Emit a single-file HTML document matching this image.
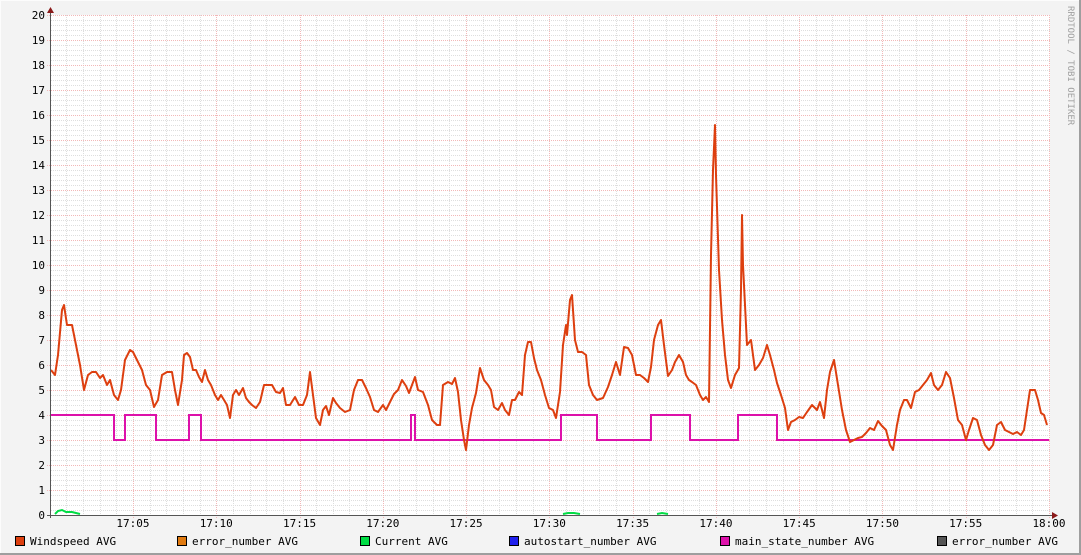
<!DOCTYPE html>
<html><head><meta charset="utf-8"><style>
html,body{margin:0;padding:0;background:#f3f3f3;}
svg{display:block;font-family:"DejaVu Sans Mono","Liberation Mono",monospace;}
</style></head><body>
<svg width="1081" height="555" viewBox="0 0 1081 555" xmlns="http://www.w3.org/2000/svg">
<rect x="0" y="0" width="1081" height="555" fill="#f3f3f3"/>
<line x1="0.5" y1="0" x2="0.5" y2="555" stroke="#fcfcfc"/>
<line x1="0" y1="0.5" x2="1081" y2="0.5" stroke="#fcfcfc"/>
<line x1="1080" y1="0" x2="1080" y2="555" stroke="#9e9e9e" stroke-width="2"/>
<line x1="0" y1="554" x2="1081" y2="554" stroke="#9e9e9e" stroke-width="2"/>
<rect x="51" y="15" width="999" height="500" fill="#ffffff"/>
<g id="grid">
<path d="M51 20.5H1050M51 25.5H1050M51 30.5H1050M51 35.5H1050" stroke="none"/>
</g>
<g stroke="#dedede" stroke-width="1" stroke-dasharray="1,1" id="minorh"></g>
<g stroke="#dedede" stroke-width="1" stroke-dasharray="1,1" id="minorv"></g>
<g stroke="#f2b8b8" stroke-width="1" stroke-dasharray="1,1" id="majorh"></g>
<g stroke="#f2b8b8" stroke-width="1" stroke-dasharray="1,1" id="majorv"></g>
<g font-size="11" fill="#000" text-anchor="end" id="ylab"></g>
<g font-size="11" fill="#000" text-anchor="middle" id="xlab"></g>
<!-- main_state -->
<polyline fill="none" stroke="#dd11aa" stroke-width="2" points="51,415 114,415 114,440 125,440 125,415 156,415 156,440 189,440 189,415 201,415 201,440 411,440 411,415 415,415 415,440 561,440 561,415 597,415 597,440 651,440 651,415 690,415 690,440 738,440 738,415 777,415 777,440 1049,440"/>
<!-- current -->
<polyline fill="none" stroke="#00dd44" stroke-width="2" points="55,514 58,511 62,510 66,512 72,512 76,513 80,514"/>
<polyline fill="none" stroke="#00dd44" stroke-width="2" points="563,514 568,513 574,513 580,514"/>
<polyline fill="none" stroke="#00dd44" stroke-width="2" points="657,514 662,513 668,514"/>
<!-- windspeed -->
<polyline fill="none" stroke="#dd3f0f" stroke-width="2" stroke-linejoin="round" points="51,370 55,375 58,355 62,310 64,305 67,325 72,325 75,340 80,365 84,390 88,375 92,372 96,372 100,378 103,375 107,385 110,380 114,395 118,400 121,390 125,360 130,350 133,352 138,362 142,370 146,385 150,390 154,407 158,400 162,375 167,372 172,372 175,390 178,405 182,380 184,355 187,353 190,357 193,370 196,370 199,377 202,382 205,370 208,380 211,385 215,395 218,400 221,395 224,400 227,405 230,418 233,395 236,390 239,395 243,388 246,398 249,402 252,405 256,408 260,402 264,385 268,385 272,385 276,392 280,393 283,388 286,405 290,405 295,397 299,405 303,405 307,395 310,372 313,395 316,418 320,425 323,410 326,406 329,415 333,398 336,403 340,408 345,412 350,410 354,390 358,380 362,380 366,388 370,397 374,410 378,412 383,405 386,410 390,402 394,394 398,390 402,380 406,386 409,393 412,385 415,377 418,390 423,392 428,405 432,420 437,425 440,425 443,385 448,382 452,384 455,378 458,392 461,420 464,440 466,450 469,425 472,408 476,393 480,368 484,380 488,385 491,390 494,407 498,410 502,403 505,410 509,415 512,400 515,400 519,392 522,395 525,355 528,342 531,342 534,358 537,370 541,380 545,395 549,408 553,410 556,418 560,392 563,345 566,325 567,335 570,300 572,295 575,340 578,352 582,352 586,355 589,385 593,395 597,400 603,398 608,387 612,375 616,362 620,375 624,347 628,348 632,355 636,375 640,375 644,378 648,382 651,367 654,340 658,325 661,320 664,345 668,376 672,370 675,362 679,355 683,362 686,375 689,380 692,382 696,385 700,395 703,400 706,397 709,402 711,255 713,170 715,125 716,175 719,270 722,320 725,355 728,380 731,388 735,375 739,368 741,290 742,215 743,265 747,345 751,340 755,370 759,365 763,358 767,345 770,355 774,370 777,383 781,395 785,408 788,430 791,422 795,420 799,417 803,418 807,412 812,405 817,410 820,402 824,418 827,390 830,372 834,360 838,385 842,410 846,430 850,442 854,440 858,438 862,437 866,433 870,428 874,430 878,421 882,426 886,430 890,445 893,450 897,425 900,410 904,400 907,400 911,408 915,392 919,390 923,385 927,380 931,373 934,385 938,390 942,385 946,372 950,378 954,398 958,420 962,425 966,440 969,430 973,418 977,420 981,435 985,445 989,450 993,445 997,425 1001,422 1005,430 1009,432 1013,434 1017,432 1021,435 1024,430 1027,410 1030,390 1035,390 1038,400 1041,413 1044,415 1047,425"/>
<!-- axes -->
<line x1="50.5" y1="12" x2="50.5" y2="518" stroke="#555" stroke-width="1"/>
<line x1="47" y1="515.5" x2="1053" y2="515.5" stroke="#555" stroke-width="1"/>
<polygon points="47,13 50.5,7 54,13" fill="#8b1a1a"/>
<polygon points="1052,512 1058,515.5 1052,519" fill="#8b1a1a"/>
<text x="1068" y="6" font-size="9" fill="#a0a0a0" transform="rotate(90 1068 6)">RRDTOOL / TOBI OETIKER</text>
<!-- legend -->
<g font-size="11" fill="#000">
<rect x="15.5" y="536.5" width="9" height="9" fill="#dd3f0f" stroke="#000"/><text x="30" y="545">Windspeed AVG</text>
<rect x="177.5" y="536.5" width="9" height="9" fill="#e07a10" stroke="#000"/><text x="192" y="545">error_number AVG</text>
<rect x="360.5" y="536.5" width="9" height="9" fill="#00dd44" stroke="#000"/><text x="375" y="545">Current AVG</text>
<rect x="509.5" y="536.5" width="9" height="9" fill="#2020ee" stroke="#000"/><text x="524" y="545">autostart_number AVG</text>
<rect x="720.5" y="536.5" width="9" height="9" fill="#dd11aa" stroke="#000"/><text x="735" y="545">main_state_number AVG</text>
<rect x="937.5" y="536.5" width="9" height="9" fill="#555555" stroke="#000"/><text x="952" y="545">error_number AVG</text>
</g>
<script>
(function(){
var ns="http://www.w3.org/2000/svg";
function L(g,x1,y1,x2,y2){var l=document.createElementNS(ns,"line");l.setAttribute("x1",x1);l.setAttribute("y1",y1);l.setAttribute("x2",x2);l.setAttribute("y2",y2);document.getElementById(g).appendChild(l);}
function T(g,x,y,s){var t=document.createElementNS(ns,"text");t.setAttribute("x",x);t.setAttribute("y",y);t.textContent=s;document.getElementById(g).appendChild(t);}
for(var i=1;i<=100;i++){var y=515-i*5+0.5;if(i%5==0){L("majorh",47,y,1050,y);}else{L("minorh",51,y,1050,y);}}
for(var v=0;v<=20;v++){T("ylab",45,515-v*25+4,String(v));}
var x0=49.7,pm=16.655;
for(var m=1;m<=60;m++){var x=Math.round(x0+m*pm)+0.5;if(m%5==0){L("majorv",x,15,x,518);}else{L("minorv",x,15,x,515);}}
for(var m=5;m<=60;m+=5){var x=x0+m*pm;var h=17+Math.floor(m/60),mm=m%60;T("xlab",x,527,h+":"+(mm<10?"0":"")+mm);}
})();
</script>
</svg>
</body></html>
